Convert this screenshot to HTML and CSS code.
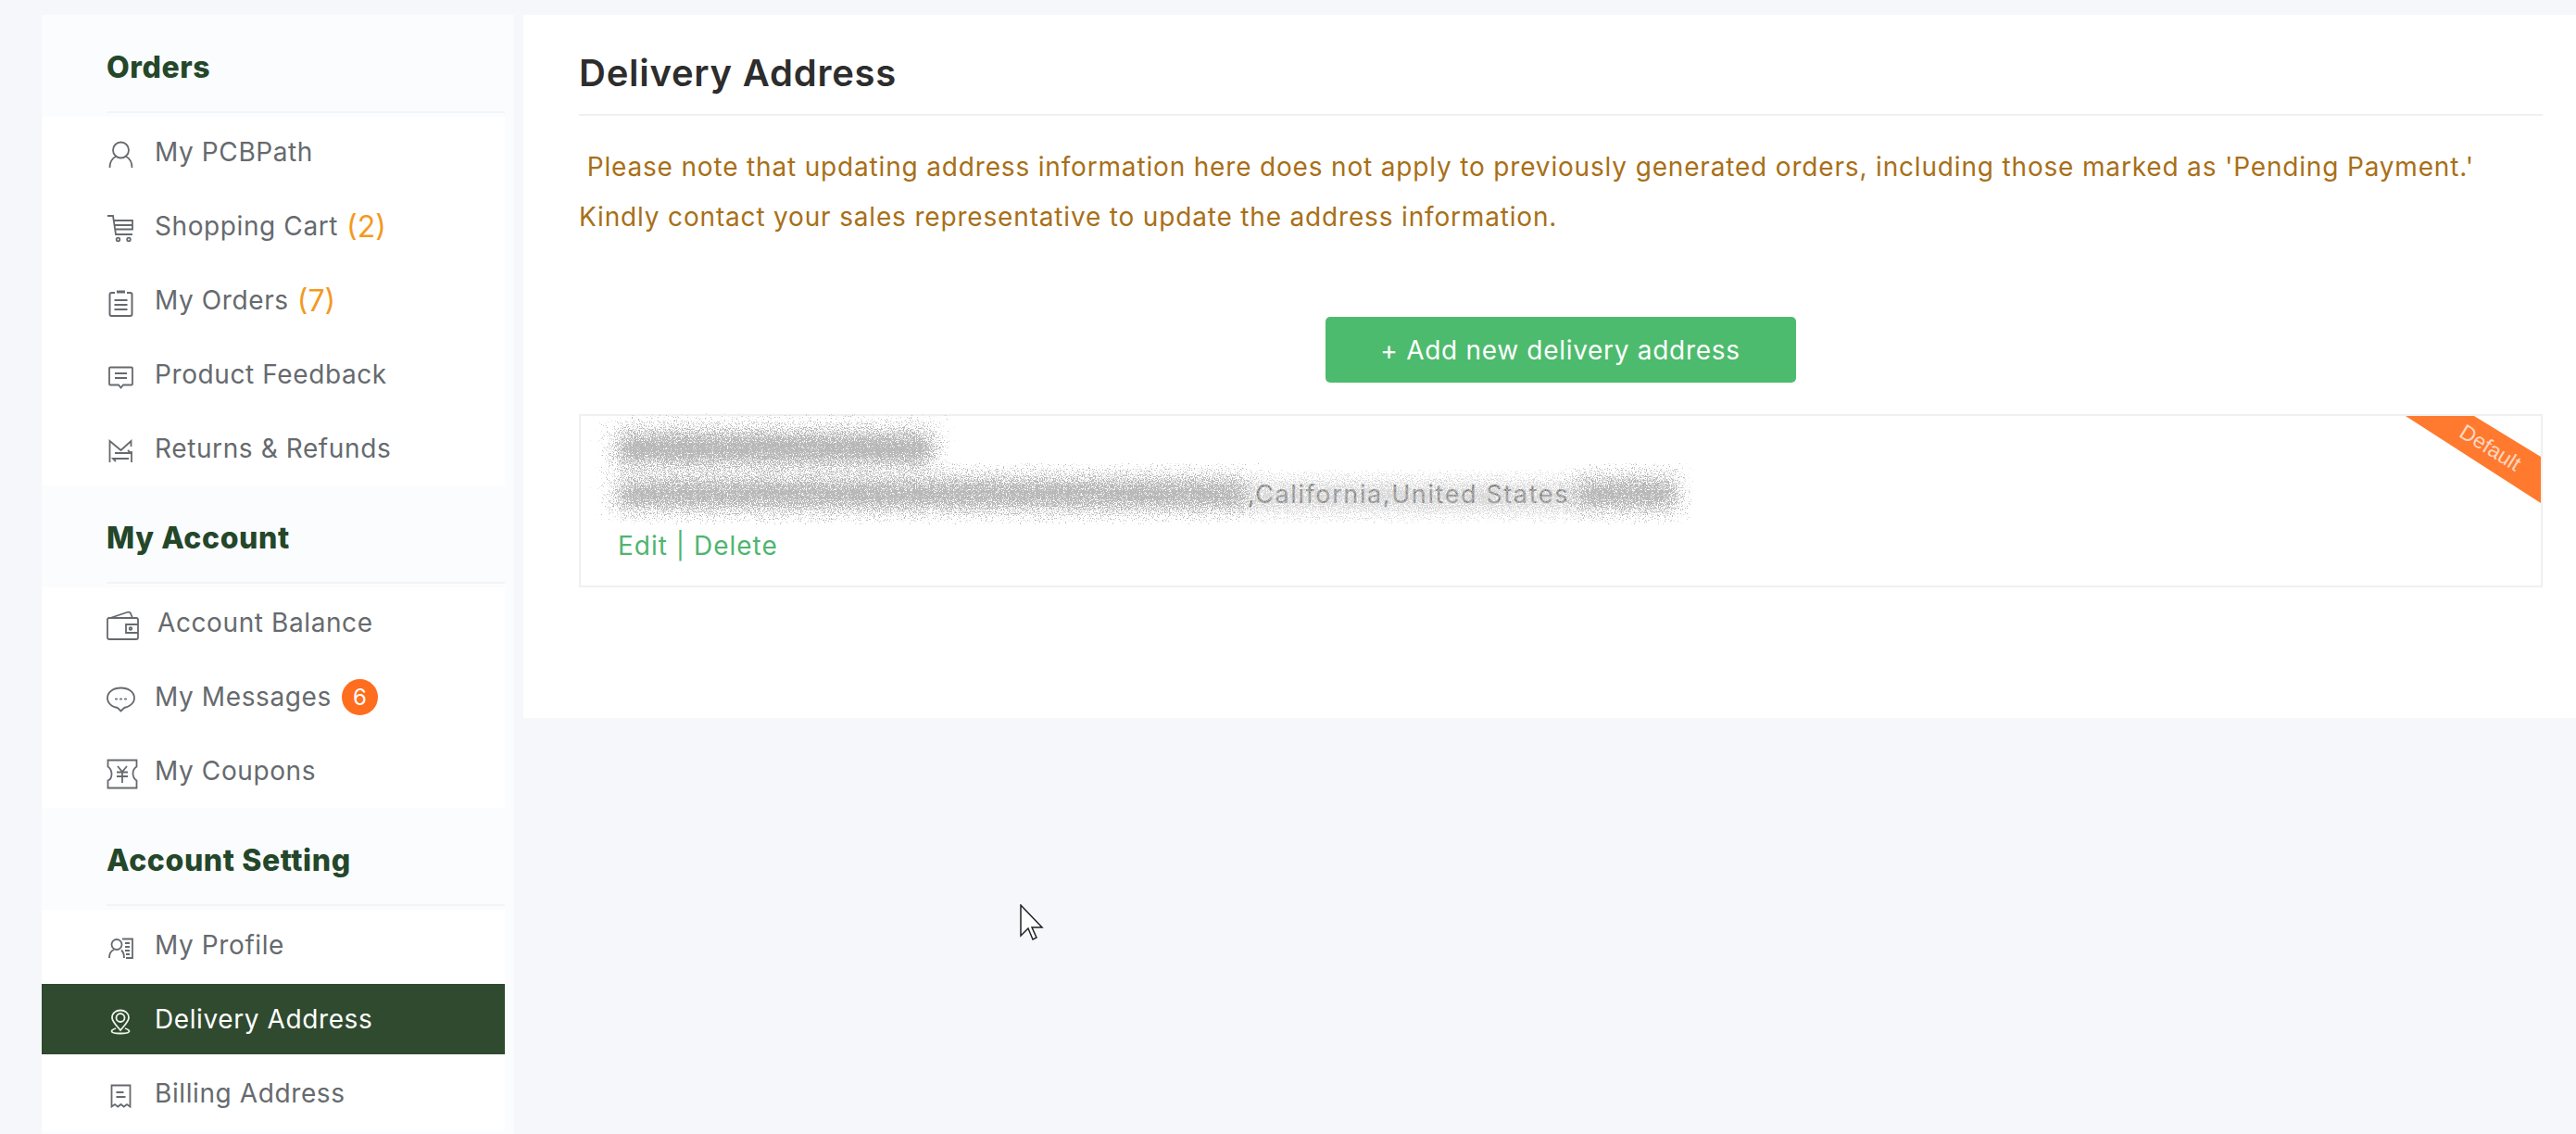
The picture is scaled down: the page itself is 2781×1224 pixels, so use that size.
FILE: index.html
```html
<!DOCTYPE html>
<html lang="en">
<head>
    <meta charset="UTF-8">
    <title>Delivery Address</title>
    <link rel="stylesheet" href="styles.css">
</head>
<body>
    <svg class="defs" width="0" height="0">
        <filter id="speckle" x="-15%" y="-60%" width="130%" height="220%">
            <feGaussianBlur in="SourceGraphic" stdDeviation="3" result="soft"/>
            <feTurbulence type="fractalNoise" baseFrequency="0.85" numOctaves="2" seed="4" result="noise"/>
            <feDisplacementMap in="soft" in2="noise" scale="80" xChannelSelector="R" yChannelSelector="G"/>
        </filter>
    </svg>

    <div class="page">
        <aside class="sidebar">
            <h3 class="side-head">Orders</h3>
            <ul class="side-list">
                <li class="side-item">
                    <span class="ico"><svg width="27" height="30" viewBox="0 0 27 30"><circle cx="13.5" cy="10" r="8.5"/><path d="M1.500 29c0-7 4-11 7.500-12.500M25.500 29c0-7-4-11-7.500-12.500"/></svg></span>
                    <span>My PCBPath</span>
                </li>
                <li class="side-item">
                    <span class="ico"><svg width="30" height="30" viewBox="0 0 30 30"><path d="M1 1h6l3 20h18M8 6h20v9.500H9.300M9 11h19"/><circle cx="12.500" cy="26.500" r="1.800"/><circle cx="24" cy="26.500" r="1.800"/></svg></span>
                    <span>Shopping Cart</span><span class="count">(2)</span>
                </li>
                <li class="side-item">
                    <span class="ico"><svg width="27" height="29" viewBox="0 0 27 29"><path d="M7 3H3.500Q1.500 3 1.500 5v21q0 2 2 2h20q2 0 2-2V5q0-2-2-2H20" stroke-width="2"/><path d="M9 2h9" stroke-width="3"/><path d="M6.500 11h14M6.500 16h14M6.500 21h14" stroke-width="2"/></svg></span>
                    <span>My Orders</span><span class="count">(7)</span>
                </li>
                <li class="side-item">
                    <span class="ico"><svg width="27" height="25" viewBox="0 0 27 25"><path d="M2 1.500h23q1 0 1 1v17q0 1-1 1H16l-2.500 3-2.500-3H2q-1 0-1-1v-17q0-1 1-1z"/><path d="M7 8h13M7 13h13"/></svg></span>
                    <span>Product Feedback</span>
                </li>
                <li class="side-item">
                    <span class="ico"><svg width="27" height="26" viewBox="0 0 27 26"><path d="M1.500 25V2l12 10 11-10v6M25 13v12"/><path d="M7 15h17l-3-3M22 21H5l3 3"/></svg></span>
                    <span>Returns &amp; Refunds</span>
                </li>
            </ul>

            <h3 class="side-head">My Account</h3>
            <ul class="side-list">
                <li class="side-item side-item-wide">
                    <span class="ico"><svg width="35" height="32" viewBox="0 0 35 32"><path d="M3 8h29q2 0 2 2v19q0 2-2 2H3q-2 0-2-2V10q0-2 2-2z"/><path d="M4 8l18-6q3-1 4 1l2 5M34 15H21v9h13"/><circle cx="26" cy="19.500" r="1.300"/></svg></span>
                    <span>Account Balance</span>
                </li>
                <li class="side-item">
                    <span class="ico"><svg width="31" height="28" viewBox="0 0 31 28"><path d="M15.500 1.500C7.500 1.500 1 6 1 12.500c0 6 6 10 11 10.500l3.500 3.500L19 23c5-1 11-4.500 11-10.500C30 6 23.500 1.500 15.500 1.500z"/><path class="dots" d="M9.500 13h2v1h-2zM14.500 13h2v1h-2zM19.500 13h2v1h-2z"/></svg></span>
                    <span>My Messages</span><span class="badge">6</span>
                </li>
                <li class="side-item side-item-mid">
                    <span class="ico"><svg width="34" height="33" viewBox="0 0 34 33"><path d="M1.500 1.500h31v7c-3 2-4 5-4 7s1 6 4 8v8h-31v-8c3-1 4-4 4-7s-1-6-4-8z" stroke-width="1.800"/><path d="M12 8l5 6 5-6M11 14.500h12M11 19h12M17 14v12"/></svg></span>
                    <span>My Coupons</span>
                </li>
            </ul>

            <h3 class="side-head">Account Setting</h3>
            <ul class="side-list">
                <li class="side-item">
                    <span class="ico"><svg width="27" height="23" viewBox="0 0 27 23"><circle cx="9" cy="7.500" r="5.500"/><path d="M1 22c0-5 2.500-8 5-9M17 22c0-3-.5-6-3-8.500M15 1.500h11V22h-7M18 6h5M18 10h5M18 14h5M19 18h4"/></svg></span>
                    <span>My Profile</span>
                </li>
                <li class="side-item side-item-active">
                    <span class="ico"><svg width="22" height="28" viewBox="0 0 22 28"><path d="M11 23C6 17 2 13.500 2 9.500 2 4.500 6 1.500 11 1.500s9 3 9 8c0 4-4 7.500-9 13.500z"/><circle cx="11" cy="9.500" r="4.500"/><path d="M6 21c-3 1-4.500 2-4.500 3 0 1.500 4 2.500 9.500 2.500s9.500-1 9.500-2.500c0-1-1.500-2-4.500-3"/></svg></span>
                    <span>Delivery Address</span>
                </li>
                <li class="side-item">
                    <span class="ico"><svg width="23" height="26" viewBox="0 0 23 26"><path d="M1.500 24.500V1.500h20v23l-3.500-2.500-3.300 2.500-3.200-2.500-3.200 2.500-3.300-2.500z" stroke-width="1.800"/><path d="M6.500 9h8M6.500 14h10"/></svg></span>
                    <span>Billing Address</span>
                </li>
            </ul>
        </aside>

        <main class="content">
            <h2 class="content-title">Delivery Address</h2>
            <p class="note">&nbsp;Please note that updating address information here does not apply to previously generated orders, including those marked as 'Pending Payment.'<br>Kindly contact your sales representative to update the address information.</p>

            <div class="add-row">
                <button class="add-btn">+ Add new delivery address</button>
            </div>

            <div class="address-card">
                <div class="corner-ribbon"><span class="corner-label">Default</span></div>
                <div class="addr-line addr-line-top"><span class="smudge smudge-name"></span></div>
                <div class="addr-line">
                    <span class="smudge smudge-street"></span>
                    <span class="addr-text">,California,United States</span>
                    <span class="smudge smudge-zip"></span>
                </div>
                <div class="addr-links">Edit | Delete</div>
            </div>
        </main>
    </div>

    <svg class="cursor" width="26" height="39" viewBox="0 0 26 39"><path d="M1 1v33l8-8 5 12 4-2-5-11h11z"/></svg>
</body>
</html>
```

FILE: styles.css
```css
* {
    box-sizing: border-box;
}

html,
body {
    height: 100%;
}

body {
    margin: 0;
    font-family: Inter, "Open Sans", sans-serif;
    background-color: #f5f7fb;
    overflow: hidden;
}

.defs {
    position: absolute;
}

.page {
    display: flex;
    gap: 10px;
    height: 100%;
    padding: 16px 0 0 45px;
}

/* left menu */
.sidebar {
    width: 510px;
    flex: none;
    padding-right: 10px;
    background-color: #fbfcfe;
}

.side-head {
    display: flex;
    align-items: center;
    height: 106px;
    margin: 0 0 0 70px;
    padding-top: 8px;
    border-bottom: 2px solid #f2f4f7;
    font-size: 32px;
    font-weight: 800;
    letter-spacing: 0.6px;
    color: #24472a;
}

.side-list {
    list-style: none;
    margin: 0;
    padding: 0 0 2px;
    background-color: #fff;
}

.side-item {
    display: flex;
    align-items: center;
    height: 76px;
    margin-top: 4px;
    padding-left: 70px;
    font-size: 28px;
    letter-spacing: 0.6px;
    color: #666a6e;
}

.ico {
    display: flex;
    justify-content: center;
    width: 30px;
    margin: 6px 22px 0 0;
}

.side-item-wide .ico {
    width: 35px;
    margin-right: 20px;
    justify-content: flex-start;
}

.side-item-mid .ico {
    width: 34px;
    margin-right: 18px;
    justify-content: flex-start;
}

.ico svg {
    display: block;
    flex: none;
    fill: none;
    stroke: #666a6e;
    stroke-width: 1.8;
}

.ico .dots {
    stroke-width: 1;
}

.count {
    margin-left: 9px;
    font-size: 32px;
    letter-spacing: 0;
    color: #f39a1f;
}

.badge {
    width: 39px;
    height: 39px;
    margin-left: 11px;
    border-radius: 50%;
    background-color: #ff6d1f;
    color: #fff;
    font-size: 24px;
    letter-spacing: 0;
    line-height: 39px;
    text-align: center;
}

.side-item-active {
    background-color: #2f4a2f;
    color: #fff;
}

.side-item-active .ico svg {
    stroke: #eef3e6;
}

/* right panel */
.content {
    flex: 1;
    height: 759px;
    padding: 0 36px 0 60px;
    background-color: #fff;
}

.content-title {
    display: flex;
    align-items: center;
    height: 109px;
    margin: 0;
    padding-top: 17px;
    border-bottom: 2px solid #f0f0f0;
    font-size: 40px;
    font-weight: 600;
    letter-spacing: 0.75px;
    color: #2d2d2d;
}

.note {
    margin: 28px 0 0;
    font-size: 28px;
    letter-spacing: 0.83px;
    line-height: 54px;
    color: #a86f17;
}

.add-row {
    display: flex;
    justify-content: center;
    margin-top: 81px;
    padding-right: 1px;
}

.add-btn {
    width: 508px;
    height: 71px;
    border: none;
    border-radius: 5px;
    background-color: #4dbb6d;
    color: #fff;
    font-family: inherit;
    font-size: 28px;
    letter-spacing: 0.7px;
    cursor: pointer;
}

.address-card {
    position: relative;
    height: 187px;
    margin-top: 34px;
    padding: 10px 0 0 40px;
    border: 2px solid #f0f0f0;
}

.addr-line {
    display: flex;
    align-items: center;
    height: 48px;
    color: #777;
    font-size: 27px;
    letter-spacing: 1.6px;
}

.addr-line-top {
    height: 50px;
}

.smudge {
    display: block;
    height: 30px;
    background-color: #b8b8b8;
    filter: url(#speckle);
}

.smudge-name {
    width: 340px;
    height: 34px;
}

.smudge-street {
    width: 680px;
}

.smudge-zip {
    width: 110px;
}

.addr-text {
    position: relative;
    width: 354px;
    white-space: nowrap;
}

/* the blur runs on over the part of the address that is still readable */
.addr-text::before {
    content: "";
    position: absolute;
    top: 6px;
    left: 0;
    width: 100%;
    height: 26px;
    background-color: #c4c4c4;
    opacity: 0.65;
    filter: url(#speckle);
}

.addr-links {
    margin-top: 15px;
    font-size: 28px;
    letter-spacing: 1px;
    color: #4fb56f;
}

.corner-ribbon {
    position: absolute;
    top: 0;
    right: 0;
    width: 146px;
    height: 94px;
    background-color: #ff7a2e;
    clip-path: polygon(0 0, 74px 0, 100% 44px, 100% 100%);
}

.corner-label {
    position: absolute;
    top: 21px;
    left: 55px;
    font-family: "Liberation Sans", sans-serif;
    font-size: 23px;
    color: #ffd6c0;
    transform: rotate(32deg);
}

.cursor {
    position: absolute;
    top: 976px;
    left: 1101px;
    fill: #fff;
    stroke: #222;
    stroke-width: 1.5;
}
```
